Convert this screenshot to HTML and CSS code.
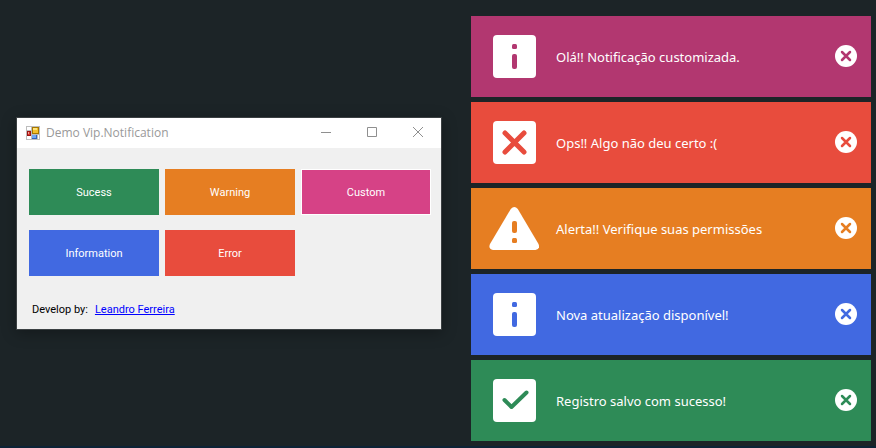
FILE: index.html
```html
<!DOCTYPE html>
<html lang="pt-BR">
<head>
<meta charset="utf-8">
<title>Demo Vip.Notification</title>
<link rel="stylesheet" href="styles.css">
</head>
<body>
<main class="desktop">
  <section class="window">
    <header class="titlebar">
      <svg class="app-icon" width="14" height="14" viewBox="0 0 14 14" shape-rendering="crispEdges">
        <path fill="#bdbdbd" d="M0 0h14v14H0z"/>
        <path fill="#fff" d="M1 1h4v3H1zM1 10h4v3H1zM12 9h1v4h-1z"/>
        <path fill="#9a1515" d="M1 5h4v5H1z"/><path fill="#d8392b" d="M2 6h2v3H2z"/><path fill="#f3a097" d="M2 6h1v2H2z"/>
        <path fill="#a87800" d="M6 1h7v7H6z"/><path fill="#f3c02c" d="M7 2h5v5H7z"/><path fill="#ffe47c" d="M7 2h4v2H7z"/>
        <path fill="#3264bd" d="M6 9h5v4H6z"/><path fill="#72a8f3" d="M6 9h4v3H6z"/>
      </svg>
      <h1 class="title">Demo Vip.Notification</h1>
      <div class="caption-buttons">
        <button class="caption" aria-label="Minimize"><svg width="12" height="12" viewBox="0 0 12 12"><path d="M1 5.500h10"/></svg></button>
        <button class="caption" aria-label="Maximize"><svg width="12" height="12" viewBox="0 0 12 12"><path d="M1.500 .500h9v9h-9z"/></svg></button>
        <button class="caption" aria-label="Close"><svg width="12" height="12" viewBox="0 0 12 12"><path d="M1 0l10 10M11 0L1 10"/></svg></button>
      </div>
    </header>
    <div class="content">
      <div class="actions">
        <button class="action green">Sucess</button>
        <button class="action orange">Warning</button>
        <button class="action pink">Custom</button>
        <button class="action blue">Information</button>
        <button class="action red">Error</button>
      </div>
      <p class="credit"><span>Develop by:</span><a href="#">Leandro Ferreira</a></p>
    </div>
  </section>

  <section class="toasts" aria-label="Notifications">
    <article class="toast magenta">
      <svg class="icon" viewBox="0 0 50 43"><rect class="solid" x="4" width="43" height="43" rx="4"/><rect class="mark" x="23" y="9" width="5" height="5" rx="1.500"/><rect class="mark" x="23" y="19" width="5" height="15" rx="2"/></svg>
      <p class="message">Olá!! Notificação customizada.</p>
      <button class="close" aria-label="Close"><svg viewBox="0 0 22 22"><circle class="solid" cx="11" cy="11" r="11"/><path class="line" d="M7 7l8 8M15 7l-8 8"/></svg></button>
    </article>
    <article class="toast red">
      <svg class="icon" viewBox="0 0 50 43"><rect class="solid" x="4" width="43" height="43" rx="4"/><path class="line thick" d="M16 12l19 19M35 12L16 31"/></svg>
      <p class="message">Ops!! Algo não deu certo :(</p>
      <button class="close" aria-label="Close"><svg viewBox="0 0 22 22"><circle class="solid" cx="11" cy="11" r="11"/><path class="line" d="M7 7l8 8M15 7l-8 8"/></svg></button>
    </article>
    <article class="toast orange">
      <svg class="icon" viewBox="0 0 50 43"><path class="solid" d="M21.800 2Q25.300-2 28.800 2L49.500 37Q51.500 42 46.500 43H4Q-1 42 1 37z"/><rect class="mark" x="23" y="14" width="5" height="12" rx="2"/><rect class="mark" x="23" y="31" width="5" height="5" rx="1.500"/></svg>
      <p class="message">Alerta!! Verifique suas permissões</p>
      <button class="close" aria-label="Close"><svg viewBox="0 0 22 22"><circle class="solid" cx="11" cy="11" r="11"/><path class="line" d="M7 7l8 8M15 7l-8 8"/></svg></button>
    </article>
    <article class="toast blue">
      <svg class="icon" viewBox="0 0 50 43"><rect class="solid" x="4" width="43" height="43" rx="4"/><rect class="mark" x="23" y="9" width="5" height="5" rx="1.500"/><rect class="mark" x="23" y="19" width="5" height="15" rx="2"/></svg>
      <p class="message">Nova atualização disponível!</p>
      <button class="close" aria-label="Close"><svg viewBox="0 0 22 22"><circle class="solid" cx="11" cy="11" r="11"/><path class="line" d="M7 7l8 8M15 7l-8 8"/></svg></button>
    </article>
    <article class="toast green">
      <svg class="icon" viewBox="0 0 50 43"><rect class="solid" x="4" width="43" height="43" rx="4"/><path class="line check" d="M15.500 21l7 7L37.500 13.500"/></svg>
      <p class="message">Registro salvo com sucesso!</p>
      <button class="close" aria-label="Close"><svg viewBox="0 0 22 22"><circle class="solid" cx="11" cy="11" r="11"/><path class="line" d="M7 7l8 8M15 7l-8 8"/></svg></button>
    </article>
  </section>
</main>
<div class="taskbar"></div>
</body>
</html>
```
FILE: styles.css
```css
* { box-sizing: border-box; }
body {
  margin: 0;
  min-height: 100vh;
  display: flex;
  flex-direction: column;
  background: #1c2427;
  font-family: "Noto Sans", "Open Sans", sans-serif;
}
h1, p { margin: 0; }
button { border: 0; padding: 0; font: inherit; }
svg { display: block; }

.green { --tone: #2e8b57; }
.orange { --tone: #e67e22; }
.pink { --tone: #d64286; }
.magenta { --tone: #b23770; }
.blue { --tone: #4169e1; }
.red { --tone: #e84c3d; }

.desktop {
  flex: 1;
  display: grid;
  grid-template-columns: minmax(0, 426fr) minmax(0, 400fr);
  gap: 29px;
  align-items: start;
  padding: 16px 5px 5px 16px;
}
.taskbar { height: 2px; background: #0d2336; }

.window {
  margin-top: 101px;
  border: 1px solid #3b4042;
  background: #f0f0f0;
  box-shadow: 0 3px 14px rgba(0, 0, 0, 0.3);
}
.titlebar {
  display: flex;
  align-items: center;
  height: 30px;
  padding: 0 0 1px 9px;
  background: #fff;
}
.title {
  flex: 1;
  margin-left: 6px;
  font-family: "Open Sans", sans-serif;
  font-size: 12px;
  font-weight: 400;
  color: #999;
}
.caption-buttons { display: flex; }
.caption {
  display: grid;
  place-items: center;
  width: 46px;
  height: 28px;
  background: none;
}
.caption path { fill: none; stroke: #8f8f8f; }

.content {
  padding: 21px 10px 11px 12px;
  font-family: Roboto, sans-serif;
  font-size: 11px;
}
.actions {
  display: grid;
  grid-template-columns: repeat(3, 1fr);
  gap: 15px 6px;
}
.action { height: 46px; background: var(--tone); color: #fff; }
.action.pink { border: 1px solid #fff; }
.credit {
  display: flex;
  gap: 7px;
  margin-top: 26px;
  padding-left: 3px;
  line-height: 16px;
  color: #000;
}
.credit a { color: #00f; }

.toasts { display: grid; gap: 5px; }
.toast {
  display: flex;
  align-items: center;
  height: 81px;
  padding: 0 14px 0 18px;
  background: var(--tone);
  color: #fff;
}
.icon { width: 50px; height: 43px; }
.message { flex: 1; margin-left: 17px; font-size: 13px; }
.close { width: 22px; padding-bottom: 1px; background: none; }
.solid { fill: #fff; }
.mark { fill: var(--tone); }
.line {
  fill: none;
  stroke: var(--tone);
  stroke-width: 2.500;
  stroke-linecap: round;
}
.thick { stroke-width: 5; }
.check { stroke-width: 4; stroke-linejoin: round; }
```
